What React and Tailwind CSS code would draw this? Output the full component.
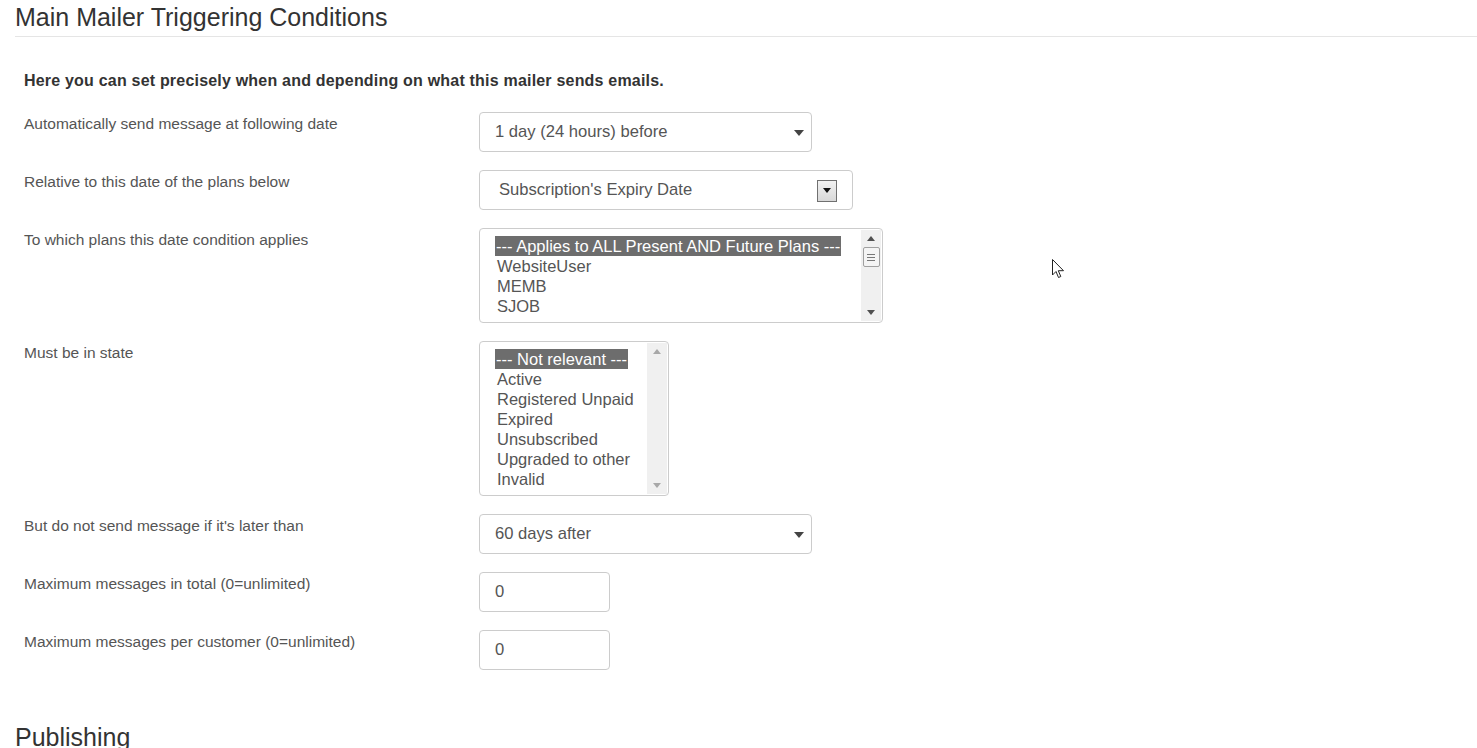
import React from "react";

const font = { fontFamily: '"Liberation Sans", Arial, Helvetica, sans-serif' };

function Caret() {
  return (
    <svg width="10" height="6" viewBox="0 0 10 6" className="shrink-0">
      <path d="M0 0 L10 0 L5 6 Z" fill="#444" />
    </svg>
  );
}

function Tri({ up, color = "#505050" }) {
  return (
    <svg width="8" height="5" viewBox="0 0 8 5">
      {up ? <path d="M0 5 L8 5 L4 0 Z" fill={color} /> : <path d="M0 0 L8 0 L4 5 Z" fill={color} />}
    </svg>
  );
}

function Label({ children }) {
  return <div className="w-[455px] shrink-0 pt-[2px] text-[15.5px] leading-[20px] text-[#555]">{children}</div>;
}

function Row({ label, children }) {
  return (
    <div className="flex mb-[18px]">
      <Label>{label}</Label>
      {children}
    </div>
  );
}

function BsSelect({ value, width }) {
  return (
    <div className={`flex items-center justify-between h-[40px] ${width} border border-[#ccc] rounded-[4px] bg-white pl-[15px] pr-[7px] pt-[1px] text-[16.6px] text-[#555]`}>
      <span>{value}</span>
      <Caret />
    </div>
  );
}

function ListBox({ items, width, height, thumb, trackColor, arrowColor }) {
  return (
    <div className={`flex ${width} ${height} border border-[#ccc] rounded-[4px] bg-white overflow-hidden`}>
      <div className="flex-1 pl-[15px] pt-[7px] text-[16.5px] leading-[20px] text-[#555]">
        {items.map((it, i) => (
          <div key={i} className={i === 0 ? "inline-block bg-[#6d6d6d] text-white px-[1px] whitespace-nowrap" : "px-[2px] whitespace-nowrap"}>
            {it}
          </div>
        ))}
      </div>
      <div className={`w-[20px] mr-[1px] my-[1px] flex flex-col items-center ${trackColor}`}>
        <div className="h-[17px] flex items-center justify-center">
          <Tri up color={arrowColor} />
        </div>
        {thumb ? (
          <div className="w-[17px] h-[20px] border border-[#a0a0a0] rounded-[2px] bg-[#f4f4f4] flex flex-col items-center justify-center gap-[2px]">
            <div className="w-[8px] h-[1px] bg-[#777]" />
            <div className="w-[8px] h-[1px] bg-[#777]" />
            <div className="w-[8px] h-[1px] bg-[#777]" />
          </div>
        ) : null}
        <div className="flex-1" />
        <div className="h-[17px] flex items-center justify-center">
          <Tri color={arrowColor} />
        </div>
      </div>
    </div>
  );
}

function TextInput({ value }) {
  return (
    <div className="flex items-center h-[40px] w-[131px] border border-[#ccc] rounded-[4px] bg-white pl-[15px] pt-[1px] text-[16.6px] text-[#555]">
      {value}
    </div>
  );
}

export default function App() {
  return (
    <div className="relative w-[1477px] h-[748px] overflow-hidden bg-white" style={font}>
      <div className="pl-[15px]">
        <div className="pt-[3px] pb-[4px] border-b border-[#e5e5e5]">
          <h3 className="text-[25px] leading-[29px] text-[#333]">Main Mailer Triggering Conditions</h3>
        </div>
        <div className="pl-[9px]">
          <p className="mt-[34px] mb-[21px] text-[16px] tracking-[0.2px] leading-[20px] font-bold text-[#333]">
            Here you can set precisely when and depending on what this mailer sends emails.
          </p>

          <Row label="Automatically send message at following date">
            <BsSelect value="1 day (24 hours) before" width="w-[333px]" />
          </Row>

          <Row label="Relative to this date of the plans below">
            <div className="flex items-center justify-between h-[40px] w-[374px] border border-[#ccc] rounded-[4px] bg-white pl-[19px] pr-[15px] pt-[1px] text-[16.6px] text-[#555]">
              <span>Subscription's Expiry Date</span>
              <div className="w-[20px] h-[22px] border border-[#707070] bg-gradient-to-b from-[#f2f2f2] to-[#d8d8d8] flex items-center justify-center">
                <Tri color="#111" />
              </div>
            </div>
          </Row>

          <Row label="To which plans this date condition applies">
            <ListBox
              items={["--- Applies to ALL Present AND Future Plans ---", "WebsiteUser", "MEMB", "SJOB"]}
              width="w-[404px]"
              height="h-[95px]"
              thumb
              trackColor="bg-[#f0f0f0]"
              arrowColor="#505050"
            />
          </Row>

          <Row label="Must be in state">
            <ListBox
              items={["--- Not relevant ---", "Active", "Registered Unpaid", "Expired", "Unsubscribed", "Upgraded to other", "Invalid"]}
              width="w-[190px]"
              height="h-[155px]"
              trackColor="bg-[#f0f0f0]"
              arrowColor="#a8a8a8"
            />
          </Row>

          <Row label="But do not send message if it's later than">
            <BsSelect value="60 days after" width="w-[333px]" />
          </Row>

          <Row label="Maximum messages in total (0=unlimited)">
            <TextInput value="0" />
          </Row>

          <Row label="Maximum messages per customer (0=unlimited)">
            <TextInput value="0" />
          </Row>
        </div>
        <h3 className="mt-[53px] text-[25px] leading-[29px] text-[#333]">Publishing</h3>
      </div>

      <svg className="absolute left-[1052px] top-[259px]" width="13" height="20" viewBox="0 0 13 20">
        <path d="M0.5 0.5 L0.5 16 L4 12.5 L6.5 18.5 L8.8 17.5 L6.3 11.7 L11.5 11.7 Z" fill="white" stroke="#222" strokeWidth="1" />
      </svg>
    </div>
  );
}
